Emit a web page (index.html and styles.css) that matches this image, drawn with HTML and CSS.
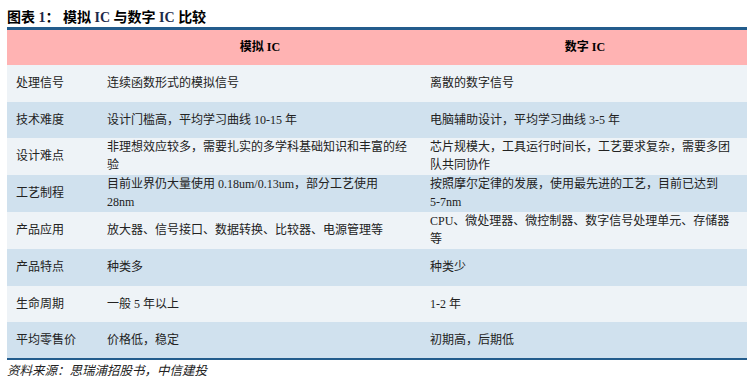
FILE: index.html
```html
<!DOCTYPE html>
<html lang="zh">
<head>
<meta charset="utf-8">
<link rel="stylesheet" href="styles.css">
</head>
<body>
<div class="page">
  <div class="title">图表 <span class="num">1</span>： 模拟 <span class="num">IC</span> 与数字 <span class="num">IC</span> 比较</div>
  <table class="cmp">
    <colgroup>
      <col class="c1"><col class="c2"><col class="c3">
    </colgroup>
    <thead>
      <tr class="head"><th></th><th>模拟 IC</th><th>数字 IC</th></tr>
    </thead>
    <tbody>
      <tr class="light h37"><td>处理信号</td><td>连续函数形式的模拟信号</td><td>离散的数字信号</td></tr>
      <tr class="dark h36"><td>技术难度</td><td>设计门槛高，平均学习曲线 10-15 年</td><td>电脑辅助设计，平均学习曲线 3-5 年</td></tr>
      <tr class="light h37"><td>设计难点</td><td>非理想效应较多，需要扎实的多学科基础知识和丰富的经<br>验</td><td>芯片规模大，工具运行时间长，工艺要求复杂，需要多团<br>队共同协作</td></tr>
      <tr class="dark h37"><td>工艺制程</td><td>目前业界仍大量使用 0.18um/0.13um，部分工艺使用<br>28nm</td><td>按照摩尔定律的发展，使用最先进的工艺，目前已达到<br>5-7nm</td></tr>
      <tr class="light h37"><td>产品应用</td><td>放大器、信号接口、数据转换、比较器、电源管理等</td><td>CPU、微处理器、微控制器、数字信号处理单元、存储器<br>等</td></tr>
      <tr class="dark h37"><td>产品特点</td><td>种类多</td><td>种类少</td></tr>
      <tr class="light h36"><td>生命周期</td><td>一般 5 年以上</td><td>1-2 年</td></tr>
      <tr class="dark h37"><td>平均零售价</td><td>价格低，稳定</td><td>初期高，后期低</td></tr>
    </tbody>
  </table>
  <div class="source">资料来源：思瑞浦招股书，中信建投</div>
</div>
</body>
</html>
```

FILE: styles.css
```css
html, body {
  margin: 0;
  padding: 0;
  background: #ffffff;
}
.page {
  padding-left: 7px;
  width: 740px;
  font-family: "Liberation Serif", "Noto Sans CJK SC", serif;
  color: #222222;
}
.title {
  padding-top: 8px;
  height: 19px;
  line-height: 19px;
  font-size: 14px;
  font-weight: bold;
  color: #000000;
  font-family: "Liberation Serif", "Noto Sans CJK SC", serif;
}
.title .num {
  color: #1d2a4a;
}
.cmp {
  width: 740px;
  border-collapse: collapse;
  table-layout: fixed;
  border-top: 3px solid #235c8c;
  border-bottom: 2px solid #235c8c;
  font-size: 12px;
}
.c1 { width: 90px; }
.c2 { width: 326px; }
.c3 { width: 324px; }
.cmp th, .cmp td {
  padding: 0;
  vertical-align: middle;
  text-align: left;
  line-height: 18px;
}
.cmp td:nth-child(1) { padding-left: 9px; }
.cmp td:nth-child(2) { padding-left: 10px; }
.cmp td:nth-child(3) { padding-left: 7px; }
.head {
  background: #ffb3b3;
  height: 36px;
}
.head th {
  text-align: center;
  font-weight: bold;
  color: #000000;
  font-size: 12px;
}
.light { background: #eef3f7; }
.dark { background: #d0e1ee; }
.h36 { height: 36px; }
.h37 { height: 37px; }
.source {
  padding-top: 3px;
  font-size: 12.5px;
  line-height: 16px;
  font-style: italic;
  color: #222222;
}
```
